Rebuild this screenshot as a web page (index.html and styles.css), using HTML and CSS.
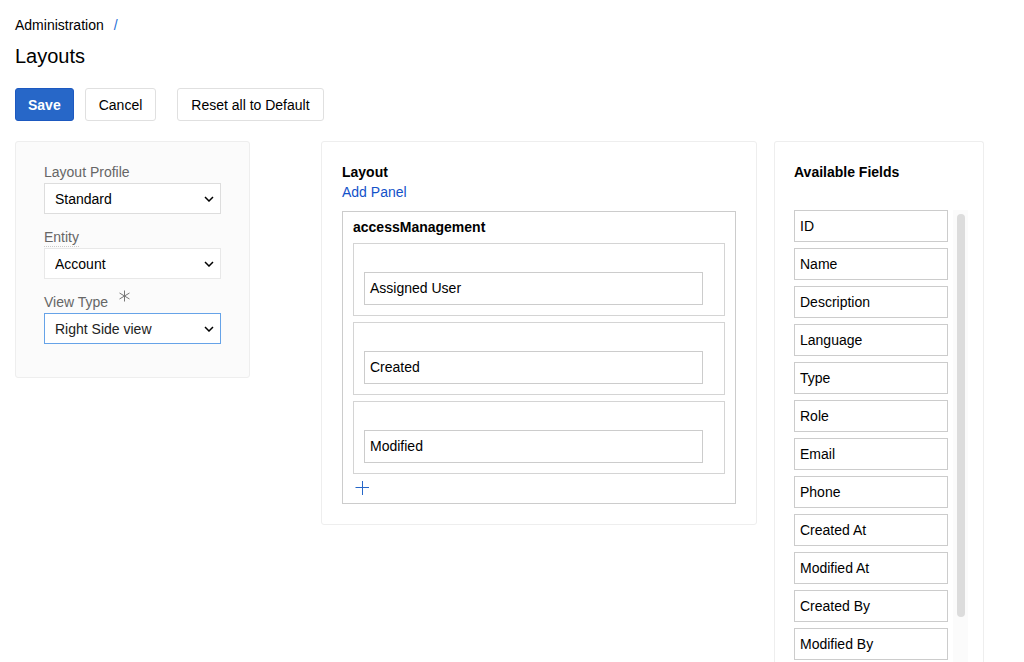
FILE: index.html
```html
<!DOCTYPE html>
<html lang="en">
<head>
  <meta charset="UTF-8">
  <meta name="viewport" content="width=device-width, initial-scale=1.0">
  <title>Layouts</title>
  <link rel="stylesheet" href="styles.css">
</head>
<body>

  <header>
    <nav class="breadcrumbs">
      <a href="#admin">Administration</a>
      <span class="separator">/</span>
    </nav>
    <h1>Layouts</h1>
    <div class="button-container">
      <button type="button" class="btn btn-primary">Save</button>
      <button type="button" class="btn">Cancel</button>
      <button type="button" class="btn btn-reset">Reset all to Default</button>
    </div>
  </header>

  <main class="content">
    <form class="box filters">
      <div class="cell">
        <label for="profile">Layout Profile</label>
        <div class="select-wrap">
          <select id="profile">
            <option>Standard</option>
          </select>
          <svg class="chevron" viewBox="0 0 10 6"><path d="M1 1l4 4 4-4"/></svg>
        </div>
      </div>
      <div class="cell">
        <label for="entity"><span class="hint">Entity</span></label>
        <div class="select-wrap">
          <select id="entity" class="light">
            <option>Account</option>
          </select>
          <svg class="chevron" viewBox="0 0 10 6"><path d="M1 1l4 4 4-4"/></svg>
        </div>
      </div>
      <div class="cell">
        <label for="view-type">View Type
          <svg class="required" viewBox="0 0 12 12"><path d="M6.5 0.5v11M1.5 3l10 6M11.5 3l-10 6"/></svg>
        </label>
        <div class="select-wrap">
          <select id="view-type" class="active">
            <option>Right Side view</option>
          </select>
          <svg class="chevron" viewBox="0 0 10 6"><path d="M1 1l4 4 4-4"/></svg>
        </div>
      </div>
    </form>

    <section class="box layout">
      <h2>Layout</h2>
      <a href="#add-panel" class="add-panel">Add Panel</a>
      <div class="panel">
        <h3>accessManagement</h3>
        <ul class="rows">
          <li class="row"><div class="field">Assigned User</div></li>
          <li class="row"><div class="field">Created</div></li>
          <li class="row"><div class="field">Modified</div></li>
        </ul>
        <button type="button" class="add-row" aria-label="Add row">
          <svg viewBox="0 0 14 14"><path d="M7.5 0v14M0.5 6.5h13.5"/></svg>
        </button>
      </div>
    </section>

    <section class="box available">
      <h2>Available Fields</h2>
      <div class="scroll-area">
        <ul class="fields">
          <li class="field">ID</li>
          <li class="field">Name</li>
          <li class="field">Description</li>
          <li class="field">Language</li>
          <li class="field">Type</li>
          <li class="field">Role</li>
          <li class="field">Email</li>
          <li class="field">Phone</li>
          <li class="field">Created At</li>
          <li class="field">Modified At</li>
          <li class="field">Created By</li>
          <li class="field">Modified By</li>
        </ul>
        <div class="track"><div class="thumb"></div></div>
      </div>
    </section>
  </main>

</body>
</html>
```
FILE: styles.css
```css
* {
  box-sizing: border-box;
}
body {
  font-family: "Liberation Sans", Arial, sans-serif;
  font-size: 14px;
  line-height: 20px;
  color: #000;
  background-color: #fff;
  margin: 0;
  height: 100vh;
  overflow: hidden;
  display: flex;
  flex-direction: column;
}
h1, h2, h3, ul {
  margin: 0;
  padding: 0;
}
ul {
  list-style: none;
}
a {
  color: #1352c9;
  text-decoration: none;
}
header {
  padding: 15px 15px 20px;
}
.breadcrumbs {
  display: flex;
  gap: 10px;
}
.breadcrumbs a {
  color: #000;
}
.separator {
  color: #1f6fd6;
}
h1 {
  font-size: 20px;
  font-weight: normal;
  line-height: 24px;
  margin: 9px 0 20px;
}
.button-container {
  display: flex;
  gap: 11px;
}
.btn {
  font: inherit;
  height: 33px;
  padding: 0 13px;
  color: #000;
  background-color: #fff;
  border: 1px solid #e0e0e0;
  border-radius: 3px;
}
.btn-primary {
  padding: 0 12px;
  color: #fff;
  font-weight: bold;
  background-color: #2767c8;
  border-color: #1d59c0;
}
.btn-reset {
  margin-left: 10px;
}
.content {
  flex: 1;
  min-height: 0;
  display: flex;
  align-items: flex-start;
  gap: 17px;
  padding: 0 40px 0 15px;
}
.box {
  border: 1px solid #eee;
  border-radius: 3px;
  padding: 20px;
}
h2, h3 {
  font-size: 14px;
  font-weight: bold;
}

.filters {
  flex: none;
  width: 235px;
  margin-right: 54px;
  padding: 20px 28px 33px;
  background-color: #fbfbfb;
  display: flex;
  flex-direction: column;
  gap: 13px;
}
.cell label {
  display: flex;
  gap: 10px;
  height: 20px;
  color: #666;
  margin-bottom: 1px;
}
.hint {
  border-bottom: 1px dotted #ccc;
}
.required {
  width: 12px;
  height: 12px;
  margin-top: -2px;
  fill: none;
  stroke: #777;
}
.select-wrap {
  position: relative;
}
select {
  appearance: none;
  display: block;
  width: 100%;
  height: 31px;
  padding: 0 10px;
  font: inherit;
  color: #000;
  background-color: #fff;
  border: 1px solid #ddd;
  border-radius: 0;
}
select.light {
  border-color: #e8e8e8;
}
select.active {
  border-color: #66a3e8;
  color: #222;
}
.chevron {
  position: absolute;
  right: 7px;
  top: 13px;
  width: 10px;
  height: 6px;
  fill: none;
  stroke: #000;
  stroke-width: 1.5;
  pointer-events: none;
}

.layout {
  flex: 1;
}
.add-panel {
  display: block;
}
.panel {
  margin-top: 9px;
  padding: 5px 10px 1px;
  border: 1px solid #ccc;
}
.rows {
  display: flex;
  flex-direction: column;
  gap: 6px;
  margin-top: 6px;
}
.row {
  padding: 28px 21px 10px 10px;
  border: 1px solid #d4d4d4;
}
.field {
  height: 33px;
  padding: 0 5px;
  line-height: 31px;
  background-color: #fff;
  border: 1px solid #ccc;
}
.add-row {
  display: flex;
  align-items: center;
  height: 28px;
  padding: 0 2px;
  border: none;
  background: none;
}
.add-row svg {
  width: 14px;
  height: 14px;
  fill: none;
  stroke: #2767c8;
}

.available {
  flex: none;
  align-self: stretch;
  width: 210px;
  padding: 20px 15px 0 19px;
  border-bottom: none;
  border-radius: 3px 3px 0 0;
  display: flex;
  flex-direction: column;
}
.scroll-area {
  flex: 1;
  min-height: 0;
  display: flex;
  gap: 5px;
  margin-top: 28px;
}
.fields {
  flex: 1;
  display: flex;
  flex-direction: column;
  gap: 6px;
}
.fields .field {
  flex: none;
  height: 32px;
  line-height: 30px;
}
.track {
  width: 15px;
  padding: 4px 3px 0 4px;
  background-color: #fbfbfb;
}
.thumb {
  height: 90%;
  border-radius: 4px;
  background-color: #dcdcdc;
}
```
